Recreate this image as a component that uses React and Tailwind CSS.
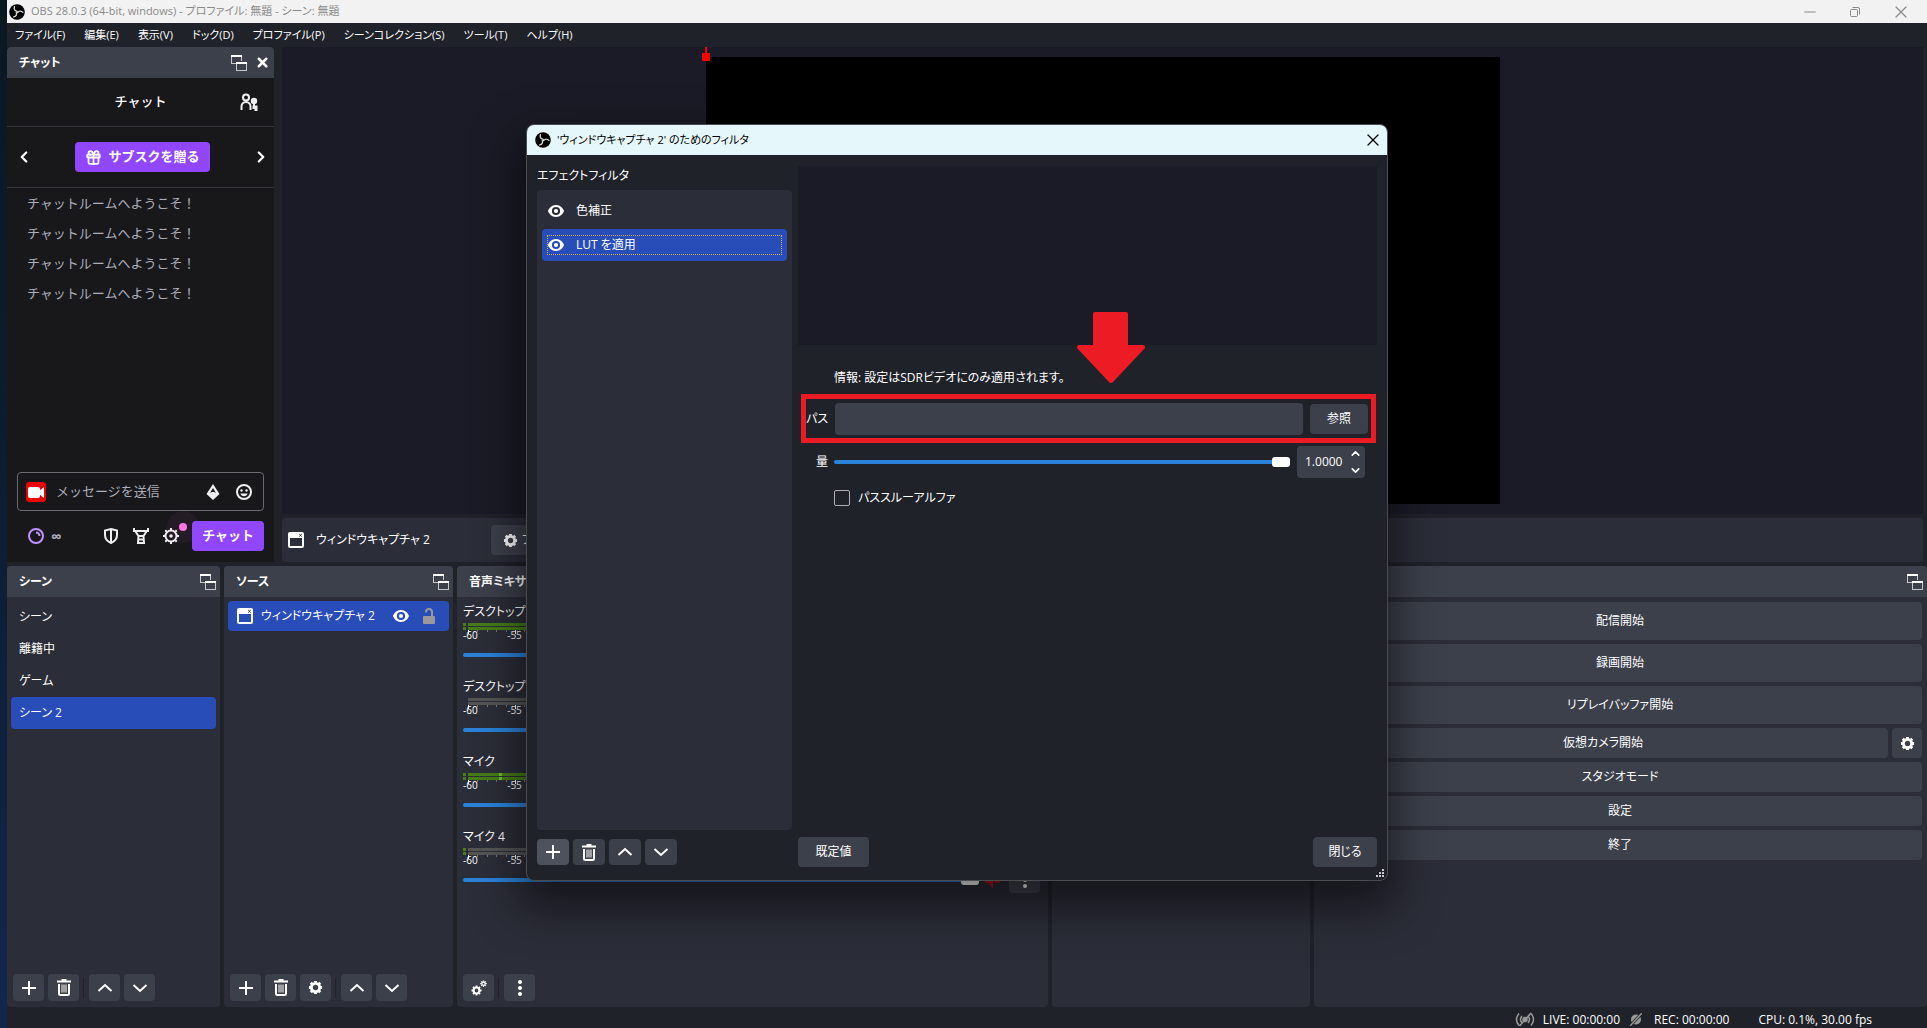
import { useState } from "react";
import { X, Minus, ChevronUp, ChevronDown, ChevronLeft, ChevronRight, Gift } from "lucide-react";

const menus = ["ファイル(F)", "編集(E)", "表示(V)", "ドック(D)", "プロファイル(P)", "シーンコレクション(S)", "ツール(T)", "ヘルプ(H)"];
const scenes = ["シーン", "離籍中", "ゲーム", "シーン 2"];
const mixers = [
  { name: "デスクトップ音声", clip: true, live: true },
  { name: "デスクトップ音声 2", clip: false, live: false },
  { name: "マイク", clip: true, live: true, peak: 36 },
  { name: "マイク 4", clip: true, live: false },
];
// one major tick for every 5 dB
const ticks = [0, 1, 2, 3, 4, 5, 6, 7, 8, 9, 10, 11];

const ObsIcon = () => (
  <svg width="16" height="16" viewBox="0 0 16 16" fill="none" className="shrink-0">
    <circle cx="8" cy="8" r="7.800" fill="#000" />
    <g stroke="#d8d8d8" strokeWidth="1.300" strokeLinecap="round">
      <path d="M8.300 7.300C5.600 6.800 4.600 4.800 5.400 2.700" />
      <path d="M8.300 7.300C5.600 6.800 4.600 4.800 5.400 2.700" transform="rotate(120 8 8)" />
      <path d="M8.300 7.300C5.600 6.800 4.600 4.800 5.400 2.700" transform="rotate(240 8 8)" />
    </g>
  </svg>
);

const PopoutIcon = () => (
  <svg width="16" height="16" viewBox="0 0 16 16" fill="none" shapeRendering="crispEdges">
    <path d="M5 8.500H0.500V1M10.500 1V6" stroke="#c8c9cc" />
    <path d="M0 1H11" stroke="#fff" strokeWidth="2" />
    <path d="M5.500 8V15.500H15.500V8" stroke="#c8c9cc" />
    <path d="M5 8H16" stroke="#fff" strokeWidth="2" />
  </svg>
);

const EyeIcon = () => (
  <svg width="16" height="16" viewBox="0 0 16 16" fill="#fff" className="shrink-0">
    <path fillRule="evenodd" d="M8 2C3.600 2 0.800 5.300 0 8c0.800 2.700 3.600 6 8 6s7.200-3.300 8-6C15.200 5.300 12.400 2 8 2Zm0 1.900a4.100 4.100 0 1 1 0 8.200 4.100 4.100 0 0 1 0-8.200Z" />
    <circle cx="8" cy="8" r="2.100" />
  </svg>
);

const GearIcon = ({ size = 16 }) => (
  <svg width={size} height={size} viewBox="0 0 16 16" fill="none" stroke="#fff" className="shrink-0">
    <circle cx="8" cy="8" r="4.400" strokeWidth="3" />
    <path strokeWidth="3" d="M8 1v2M8 13v2M1 8h2M13 8h2M3 3l1.500 1.500M11.500 11.500L13 13M13 3l-1.500 1.500M4.500 11.500L3 13" />
  </svg>
);

const TrashIcon = () => (
  <svg width="16" height="17" viewBox="0 0 16 17" fill="none" stroke="#fff">
    <path d="M1 2.500h14" strokeWidth="2" />
    <path d="M5.500 1h5" strokeWidth="2" />
    <path d="M3 5v9.500q0 1.500 1.500 1.500h7q1.500 0 1.500-1.500V5" strokeWidth="2" />
    <path d="M6 5.500v8M8 5.500v8M10 5.500v8" strokeWidth="1" />
  </svg>
);

const PlusIcon = () => (
  <svg width="14" height="14" viewBox="0 0 14 14" stroke="#fff" strokeWidth="2" shapeRendering="crispEdges">
    <path d="M7 0v14M0 7h14" />
  </svg>
);

const UpIcon = () => (
  <svg width="16" height="16" viewBox="0 0 16 16" fill="none" stroke="#fff" strokeWidth="2">
    <path d="M1.500 11L8 5l6.500 6" />
  </svg>
);

const DownIcon = () => (
  <svg width="16" height="16" viewBox="0 0 16 16" fill="none" stroke="#fff" strokeWidth="2">
    <path d="M1.500 5L8 11l6.500-6" />
  </svg>
);

const GearsIcon = () => (
  <svg width="16" height="16" viewBox="0 0 16 16" fill="none" stroke="#fff">
    <circle cx="5.500" cy="10.500" r="2.900" strokeWidth="2" />
    <path strokeWidth="1.800" d="M5.500 5.500v1.500M5.500 14v1.500M0.500 10.500H2M9 10.500h1.500M2 7l1 1M8 13l1 1M9 7L8 8M3 13l-1 1" />
    <circle cx="12.500" cy="3.700" r="1.700" strokeWidth="1.400" />
    <path strokeWidth="1.200" d="M12.500 0.500v1M12.500 6v1M9.200 3.700h1M14.800 3.700h1M10.200 1.400l.7.700M14.100 5.300l.7.700M14.800 1.400l-.7.700M10.900 5.300l-.7.700" />
  </svg>
);

const DotsIcon = () => (
  <svg width="16" height="16" viewBox="0 0 16 16" fill="#fff">
    <circle cx="8" cy="2" r="2" />
    <circle cx="8" cy="8" r="2" />
    <circle cx="8" cy="14" r="2" />
  </svg>
);

const WindowIcon = () => (
  <svg width="16" height="16" viewBox="0 0 16 16" fill="none">
    <rect x="1" y="1" width="14" height="14" rx="1" stroke="#fff" strokeWidth="2" />
    <path d="M1 3.500h14" stroke="#fff" strokeWidth="5" />
    <path d="M11.200 2l2.600 2.600M13.800 2l-2.600 2.600" stroke="#20222b" strokeWidth="0.900" />
  </svg>
);

const LockIcon = () => (
  <svg width="12" height="16" viewBox="0 0 12 16" fill="none">
    <path d="M3 4.500V4a3 3 0 0 1 6 0v5" stroke="#999" strokeWidth="2" />
    <rect y="8" width="12" height="8" rx="1" fill="#999" />
  </svg>
);

const ToolButton = ({ label, small, light, children }) => (
  <button
    type="button"
    aria-label={label}
    className={`flex items-center justify-center rounded ${small ? "h-[26px] w-8" : "h-[27px] w-[31px]"} ${light ? "bg-[#4e525d]" : "bg-[#3c404b]"}`}
  >
    {children}
  </button>
);

const Separator = () => <div className="mr-px h-5 w-px bg-[#1f2229]" />;

const DockHeader = ({ title, children }) => (
  <div className="flex h-[31px] shrink-0 items-center justify-between rounded-t bg-[#3c404b] pr-1 pl-3">
    <h2 className="truncate font-bold">{title}</h2>
    <div className="flex shrink-0 items-center gap-2">
      <button type="button" aria-label="ドックを切り離す"><PopoutIcon /></button>
      {children}
    </div>
  </div>
);

const Chat = () => {
  const [message, setMessage] = useState("");
  return (
    <section className="flex w-[267px] shrink-0 flex-col bg-[#18181b] [font-feature-settings:normal]">
      <div className="[font-feature-settings:'palt']">
        <DockHeader title="チャット">
          <button type="button" aria-label="閉じる"><X size={15} strokeWidth={4} /></button>
        </DockHeader>
      </div>
      <div className="relative flex h-[49px] items-center justify-center border-b border-[#353539] text-[13px] font-medium">
        <h3>チャット</h3>
        <button type="button" aria-label="コミュニティ" className="absolute right-4">
          <svg width="18" height="18" viewBox="0 0 18 18" fill="none" stroke="#efeff1" strokeWidth="2">
            <circle cx="6" cy="4.500" r="3" />
            <path d="M1.500 17v-3.500a4.500 4.500 0 0 1 9 0V17" />
            <circle cx="14" cy="8" r="2.200" fill="#efeff1" />
            <path d="M14 10v3" />
            <path d="M12.500 12.500h5V18h-3v-2h-2z" fill="#efeff1" stroke="none" />
          </svg>
        </button>
      </div>
      <div className="flex h-[61px] items-center justify-between border-b border-[#353539] pr-1 pl-2">
        <button type="button" aria-label="前へ"><ChevronLeft size={18} strokeWidth={3} /></button>
        <button type="button" className="flex h-[30px] items-center gap-1.5 rounded bg-[#9147ff] px-2.5 text-[13px] font-bold">
          <Gift size={17} strokeWidth={2.500} />サブスクを贈る
        </button>
        <button type="button" aria-label="次へ"><ChevronRight size={18} strokeWidth={3} /></button>
      </div>
      <ul className="flex-1 pl-5 text-[13px] leading-[30px] text-[#adadb8]">
        {[1, 2, 3, 4].map((n) => <li key={n}>チャットルームへようこそ！</li>)}
      </ul>
      <div className="px-2.5 pb-[11px]">
        <div className="flex h-[39px] items-center rounded border border-[#6b6b70] pr-2.5 pl-2">
          <svg width="20" height="20" viewBox="0 0 20 20" className="shrink-0">
            <rect width="20" height="20" rx="3" fill="#eb0400" />
            <rect x="2" y="5" width="12" height="11" rx="2" fill="#fff" />
            <path d="M13 9l5-4v11l-5-4z" fill="#fff" />
          </svg>
          <input
            type="text"
            aria-label="メッセージを送信"
            placeholder="メッセージを送信"
            value={message}
            onChange={(e) => setMessage(e.target.value)}
            className="ml-2.5 min-w-0 flex-1 bg-transparent text-[13px] outline-none placeholder:text-[#adadb8]"
          />
          <button type="button" aria-label="ビッツ" className="mr-3.5">
            <svg width="16" height="18" viewBox="0 0 16 18">
              <path fillRule="evenodd" d="M8 1l6.500 10L8 17 1.500 11zM8 5l-2.800 4.800L8 8.800l2.800 1z" fill="#efeff1" />
            </svg>
          </button>
          <button type="button" aria-label="エモート">
            <svg width="18" height="18" viewBox="0 0 18 18" fill="none">
              <circle cx="9" cy="9" r="7" stroke="#efeff1" strokeWidth="2" />
              <circle cx="6.500" cy="7.500" r="1.200" fill="#efeff1" />
              <circle cx="11.500" cy="7.500" r="1.200" fill="#efeff1" />
              <path d="M5.500 10.500a3.600 3.600 0 0 0 7 0z" fill="#efeff1" />
            </svg>
          </button>
        </div>
        <div className="mt-2.5 flex h-[30px] items-center">
          <button type="button" aria-label="チャンネルポイント" className="ml-2.5 flex items-center gap-1.5 text-[15px] leading-none text-[#adadb8]">
            <svg width="18" height="18" viewBox="0 0 18 18" fill="none" stroke="#bf94ff" strokeWidth="2">
              <circle cx="9" cy="9" r="7" />
              <path d="M9 5.500a3.500 3.500 0 0 1 3.500 3.500" />
            </svg>
            <span className="font-bold">∞</span>
          </button>
          <div className="ml-auto flex items-center gap-3">
            <button type="button" aria-label="シールド">
              <svg width="18" height="18" viewBox="0 0 18 18" fill="none" stroke="#efeff1" strokeWidth="2">
                <path d="M9 2l6 1.500V8c0 4-2.500 6.500-6 8-3.500-1.500-6-4-6-8V3.500zM9 2v14" />
              </svg>
            </button>
            <button type="button" aria-label="モデレーション">
              <svg width="18" height="18" viewBox="0 0 18 18" fill="none" stroke="#efeff1" strokeWidth="2">
                <path d="M2 1v3h14V1M3.500 4.500L6.500 9h5l3-4.500M6.500 9l-.5 7h6l-.5-7M6 12.500h6" />
              </svg>
            </button>
            <button type="button" aria-label="チャット設定" className="relative">
              <span className="absolute -top-4 -right-[19px] size-8 rounded-full bg-[#ff75e6]/5" />
              <svg width="18" height="18" viewBox="0 0 18 18" fill="none" stroke="#efeff1">
                <circle cx="9" cy="9" r="5.500" strokeWidth="2" />
                <circle cx="9" cy="9" r="1.800" fill="#efeff1" stroke="none" />
                <path strokeWidth="2" d="M9 1v2M9 15v2M1 9h2M15 9h2M3.300 3.300l1.400 1.400M13.300 13.300l1.400 1.400M14.700 3.300l-1.400 1.400M4.700 13.300l-1.400 1.400" />
              </svg>
              <span className="absolute -top-1 -right-[7px] size-2 rounded-full bg-[#ff75e6]" />
            </button>
          </div>
          <button type="button" className="relative ml-3 h-[30px] rounded bg-[#9147ff] px-2.5 text-[13px] font-bold">チャット</button>
        </div>
      </div>
    </section>
  );
};

const Slider = ({ id, label }) => (
  <input
    id={id}
    aria-label={label}
    type="range"
    defaultValue={100}
    className="h-2.5 min-w-0 flex-1 appearance-none bg-transparent [&::-webkit-slider-runnable-track]:h-1 [&::-webkit-slider-runnable-track]:rounded-full [&::-webkit-slider-runnable-track]:bg-[#2a82da] [&::-webkit-slider-thumb]:-mt-[3px] [&::-webkit-slider-thumb]:h-2.5 [&::-webkit-slider-thumb]:w-[18px] [&::-webkit-slider-thumb]:appearance-none [&::-webkit-slider-thumb]:rounded-[3px] [&::-webkit-slider-thumb]:bg-white"
  />
);

const MixerRow = ({ item }) => {
  const bar = item.live ? "#467d18" : "#555555";
  return (
    <li className="h-[75px]">
      <p className="h-5 leading-5">{item.name}</p>
      <svg height="12" className="mt-px w-full" shapeRendering="crispEdges">
        {item.clip && <path d="M0 1.500h3M0 5.500h3" stroke="#467d18" strokeWidth="3" />}
        <rect x="5" y="0" width="570" height="3" fill={bar} />
        <rect x="5" y="4" width="570" height="3" fill={bar} />
        {item.peak && <path d={`M${item.peak} 0h3v3h-3zM${item.peak} 4h3v3h-3z`} fill="#6fc02c" />}
        {ticks.map((i) => (
          <g key={i} fill="#777">
            <rect x={5 + i * 47} y="7" width="1" height="4" fill="#fff" />
            <rect x={14 + i * 47} y="7" width="1" height="2" />
            <rect x={24 + i * 47} y="7" width="1" height="2" />
            <rect x={33 + i * 47} y="7" width="1" height="2" />
            <rect x={43 + i * 47} y="7" width="1" height="2" />
          </g>
        ))}
      </svg>
      <div className="-mt-[5px] flex text-[10px] leading-[11px]">
        <span className="w-7">-60</span>
        <span className="w-[47px] text-center">-55</span>
      </div>
      <div className="flex h-[27px] items-center">
        <Slider label={item.name} />
        <button type="button" aria-label="ミュート" className="mr-2 ml-1.5">
          <svg width="16" height="18" viewBox="0 0 16 18" fill="#b8101c">
            <path d="M0 6h3l5-5v16l-5-5H0z" />
            <path d="M10 6.500l5 5M15 6.500l-5 5" stroke="#b8101c" strokeWidth="2.500" />
          </svg>
        </button>
        <ToolButton label="その他"><DotsIcon /></ToolButton>
      </div>
    </li>
  );
};

const PanelButton = ({ tall, children }) => (
  <button type="button" className={`flex-1 rounded bg-[#3c404b] ${tall ? "h-[38px]" : "h-[30px]"}`}>{children}</button>
);

const FilterDialog = () => {
  const [amount, setAmount] = useState("1.0000");
  const [path, setPath] = useState("");
  return (
    <div
      role="dialog"
      aria-labelledby="filter-title"
      className="absolute top-[124px] left-[526px] flex h-[757px] w-[862px] flex-col overflow-hidden rounded-lg border border-[#4a4c50] bg-[#1f2229] shadow-[0_20px_44px_8px_rgba(0,0,0,0.5)]"
    >
      <div className="flex h-[30px] shrink-0 items-center bg-[#e5f7fa] pr-1 pl-2 text-black">
        <ObsIcon />
        <h2 id="filter-title" className="ml-1.5 text-[11px]">'ウィンドウキャプチャ 2' のためのフィルタ</h2>
        <button type="button" aria-label="閉じる" className="ml-auto"><X size={20} strokeWidth={1.500} /></button>
      </div>
      <div className="flex min-h-0 flex-1 gap-1.5 px-2.5 pt-[11px]">
        <div className="flex w-[255px] shrink-0 flex-col">
          <h3 className="h-6 leading-5">エフェクトフィルタ</h3>
          <ul className="h-[640px] rounded bg-[#2b2d38] p-[5px]">
            <li>
              <button type="button" className="flex h-8 w-full items-center gap-3 px-1.5"><EyeIcon />色補正</button>
            </li>
            <li className="mt-0.5">
              <button type="button" className="flex h-8 w-full items-center rounded bg-[#284cb8] px-[5px]">
                <span className="flex h-5 flex-1 items-center gap-3 border border-dotted border-[#d7b34a]"><EyeIcon />LUT を適用</span>
              </button>
            </li>
          </ul>
          <div className="mt-[9px] flex gap-1">
            <ToolButton label="追加" small light><PlusIcon /></ToolButton>
            <ToolButton label="削除" small><TrashIcon /></ToolButton>
            <ToolButton label="上へ" small><UpIcon /></ToolButton>
            <ToolButton label="下へ" small><DownIcon /></ToolButton>
          </div>
        </div>
        <div className="flex min-w-0 flex-1 flex-col">
          <div className="h-[179px] bg-[#1a1b26]" />
          <p className="mt-6 ml-9 h-[18px] leading-[18px]">情報: 設定はSDRビデオにのみ適用されます。</p>
          <div className="mt-[7px] mr-px ml-[3px] flex h-[49px] items-center border-[5px] border-[#ed1c24]">
            <label htmlFor="lut-path" className="w-[29px] shrink-0">パス</label>
            <input
              id="lut-path"
              type="text"
              value={path}
              onChange={(e) => setPath(e.target.value)}
              className="h-8 min-w-0 flex-1 rounded bg-[#3c404b] px-2 outline-none"
            />
            <button type="button" className="mr-[3px] ml-[7px] h-[30px] w-[58px] rounded bg-[#3c404b]">参照</button>
          </div>
          <div className="mt-[3px] mr-3 flex h-8 items-center">
            <label htmlFor="lut-amount" className="w-9 shrink-0 pr-1.5 text-right">量</label>
            <Slider id="lut-amount" />
            <div className="ml-[7px] flex h-8 w-[68px] items-center rounded bg-[#3c404b] pl-2">
              <input
                type="text"
                aria-label="量の値"
                value={amount}
                onChange={(e) => setAmount(e.target.value)}
                className="w-11 min-w-0 bg-transparent outline-none"
              />
              <div className="flex flex-col gap-1">
                <button type="button" aria-label="増やす"><ChevronUp size={13} strokeWidth={3} /></button>
                <button type="button" aria-label="減らす"><ChevronDown size={13} strokeWidth={3} /></button>
              </div>
            </div>
          </div>
          <label className="mt-3 ml-9 flex h-4 items-center gap-2">
            <input type="checkbox" className="size-4 appearance-none rounded-xs border border-[#b0b1b4] checked:bg-[#284cb8]" />
            パススルーアルファ
          </label>
          <div className="mt-auto mb-[13px] flex justify-between">
            <button type="button" className="h-[30px] w-[71px] rounded bg-[#3c404b]">既定値</button>
            <button type="button" className="h-[30px] w-16 rounded bg-[#3c404b]">閉じる</button>
          </div>
        </div>
      </div>
      <svg width="9" height="9" viewBox="0 0 9 9" fill="#c8c9cc" shapeRendering="crispEdges" className="absolute right-0.5 bottom-0.5">
        <path d="M6 0h2v2H6zM6 3h2v2H6zM6 6h2v2H6zM3 3h2v2H3zM3 6h2v2H3zM0 6h2v2H0z" />
      </svg>
      <svg width="68" height="72" viewBox="0 0 68 72" fill="#ed1c24" className="absolute top-[187px] left-[550px]">
        <path d="M18 0h31q2 0 2 2v31h15q2 0 2 3L36 70q-2 2-4 0L0 36q0-3 2-3h14V2q0-2 2-2z" />
      </svg>
    </div>
  );
};

const App = () => {
  const [scene, setScene] = useState("シーン 2");
  return (
    <div className="relative flex h-screen overflow-hidden bg-gradient-to-b from-[#0a1822] via-[#0d1d33] to-[#14264c] pl-[7px] font-['Open_Sans','Noto_Sans_CJK_JP',sans-serif] text-[12px] text-white [font-feature-settings:'palt']">
      <div className="flex min-w-0 flex-1 flex-col bg-[#1f2229]">
        <header className="flex h-[23px] shrink-0 items-center bg-[#f2f2f2] pl-0.5 text-[#8a8a8a]">
          <ObsIcon />
          <h1 className="ml-1.5 text-[11px]">OBS 28.0.3 (64-bit, windows) - プロファイル: 無題 - シーン: 無題</h1>
          <div className="mr-4 ml-auto flex items-center gap-[29px]">
            <button type="button" aria-label="最小化"><Minus size={18} strokeWidth={1.500} /></button>
            <button type="button" aria-label="元に戻す">
              <svg width="14" height="14" viewBox="0 0 14 14" fill="none" stroke="#8a8a8a">
                <rect x="2.500" y="4.500" width="7" height="7" rx="1" />
                <path d="M4.500 2.500h5.500q1.500 0 1.500 1.500v5.500" />
              </svg>
            </button>
            <button type="button" aria-label="閉じる"><X size={20} strokeWidth={1.500} /></button>
          </div>
        </header>
        <nav className="flex h-6 shrink-0 items-center gap-[19px] pl-2 text-[11px]">
          {menus.map((menu) => <button key={menu} type="button">{menu}</button>)}
        </nav>

        <div className="flex min-h-0 flex-1 gap-2">
          <Chat />
          <div className="mr-1 flex min-w-0 flex-1 flex-col gap-1">
            <div className="flex min-h-0 flex-1 items-center justify-center bg-[#1a1b26]">
              <div className="relative h-[447px] w-[794px] bg-black">
                <span className="absolute -top-2.5 -left-px h-2 w-0.5 bg-[#ff0000]" />
                <span className="absolute -top-1 -left-1 size-2 bg-[#ff0000]" />
              </div>
            </div>
            <div className="flex h-11 items-center rounded bg-[#2b2d38] pl-1.5">
              <WindowIcon />
              <p className="ml-3 w-[175px]">ウィンドウキャプチャ 2</p>
              <button type="button" className="flex h-[30px] items-center gap-1 rounded bg-[#3c404b] px-3"><GearIcon size={15} />フィルタ</button>
            </div>
          </div>
        </div>

        <main className="mt-1 flex h-[441px] shrink-0 gap-1">
          <section className="flex w-[213px] shrink-0 flex-col rounded bg-[#2b2d38]">
            <DockHeader title="シーン" />
            <ul className="flex-1 p-1">
              {scenes.map((name) => (
                <li key={name}>
                  <button
                    type="button"
                    onClick={() => setScene(name)}
                    className={`h-8 w-full rounded px-2 text-left ${scene === name ? "bg-[#284cb8]" : ""}`}
                  >
                    {name}
                  </button>
                </li>
              ))}
            </ul>
            <div className="flex items-center gap-1 px-1.5 pb-1.5">
              <ToolButton label="追加"><PlusIcon /></ToolButton>
              <ToolButton label="削除"><TrashIcon /></ToolButton>
              <Separator />
              <ToolButton label="上へ"><UpIcon /></ToolButton>
              <ToolButton label="下へ"><DownIcon /></ToolButton>
            </div>
          </section>

          <section className="flex w-[229px] shrink-0 flex-col rounded bg-[#2b2d38]">
            <DockHeader title="ソース" />
            <ul className="flex-1 p-1">
              <li className="flex h-[30px] items-center rounded bg-[#284cb8] pr-3.5 pl-[9px]">
                <WindowIcon />
                <span className="ml-2 flex-1">ウィンドウキャプチャ 2</span>
                <button type="button" aria-label="表示切替" className="mr-3.5"><EyeIcon /></button>
                <button type="button" aria-label="ロック"><LockIcon /></button>
              </li>
            </ul>
            <div className="flex items-center gap-1 px-1.5 pb-1.5">
              <ToolButton label="追加"><PlusIcon /></ToolButton>
              <ToolButton label="削除"><TrashIcon /></ToolButton>
              <ToolButton label="プロパティ"><GearIcon size={15} /></ToolButton>
              <Separator />
              <ToolButton label="上へ"><UpIcon /></ToolButton>
              <ToolButton label="下へ"><DownIcon /></ToolButton>
            </div>
          </section>

          <section className="flex w-[591px] shrink-0 flex-col rounded bg-[#2b2d38]">
            <DockHeader title="音声ミキサー" />
            <ul className="flex-1 pt-[5px] pr-2 pl-1.5">
              {mixers.map((item) => <MixerRow key={item.name} item={item} />)}
            </ul>
            <div className="flex items-center gap-1 px-1.5 pb-1.5">
              <ToolButton label="詳細プロパティ"><GearsIcon /></ToolButton>
              <Separator />
              <ToolButton label="メニュー"><DotsIcon /></ToolButton>
            </div>
          </section>

          <section className="w-[258px] shrink-0 rounded bg-[#2b2d38]">
            <DockHeader />
          </section>

          <section className="min-w-0 flex-1 rounded bg-[#2b2d38]">
            <DockHeader />
            <div className="flex flex-col gap-1 pt-[5px] pr-[5px] pl-1">
              <div className="flex"><PanelButton tall>配信開始</PanelButton></div>
              <div className="flex"><PanelButton tall>録画開始</PanelButton></div>
              <div className="flex"><PanelButton tall>リプレイバッファ開始</PanelButton></div>
              <div className="flex gap-1">
                <PanelButton>仮想カメラ開始</PanelButton>
                <button type="button" aria-label="仮想カメラ設定" className="flex size-[30px] items-center justify-center rounded bg-[#3c404b]"><GearIcon size={15} /></button>
              </div>
              <div className="flex"><PanelButton>スタジオモード</PanelButton></div>
              <div className="flex"><PanelButton>設定</PanelButton></div>
              <div className="flex"><PanelButton>終了</PanelButton></div>
            </div>
          </section>
        </main>

        <footer className="flex h-[21px] shrink-0 items-center justify-end pt-1 pr-[55px]">
          <svg width="20" height="15" viewBox="0 0 20 15" fill="none" stroke="#999" strokeWidth="1.500" className="mr-2">
            <path d="M4 1.500q-5 6 0 12M7 4q-3 3.500 0 7M16 1.500q5 6 0 12M13 4q3 3.500 0 7M4.500 14L16 1" />
            <circle cx="10" cy="7.500" r="2" fill="#999" />
          </svg>
          <span>LIVE: 00:00:00</span>
          <svg width="12" height="13" viewBox="0 0 12 13" className="mr-3 ml-2.5">
            <circle cx="6" cy="6.500" r="5" fill="#999" />
            <path d="M0 13L12 0" stroke="#1f2229" strokeWidth="3" />
            <path d="M0 13L12 0" stroke="#999" strokeWidth="1.500" />
          </svg>
          <span>REC: 00:00:00</span>
          <span className="ml-[29px]">CPU: 0.1%, 30.00 fps</span>
        </footer>
      </div>
      <FilterDialog />
    </div>
  );
};

export default App;
